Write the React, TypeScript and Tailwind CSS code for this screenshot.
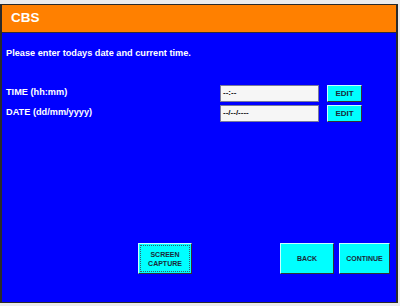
import React from "react";

const font = { fontFamily: '"Liberation Sans", Arial, sans-serif' };

const Field = ({ value }: { value: string }) => (
    <div className="flex h-[17px] w-[99px] items-center border border-[#7a7a9a] bg-[#f6f6f6] pl-[2px] text-[8px] font-bold text-[#111]">
        {value}
    </div>
);

const CyanButton = ({
    children,
    className = "",
}: {
    children: React.ReactNode;
    className?: string;
}) => (
    <button
        className={
            "flex items-center justify-center border border-t-[#c8ffff] border-l-[#c8ffff] border-r-[#333] border-b-[#333] bg-[#00ffff] text-center font-bold leading-[9px] text-[#1a2a3a] " +
            className
        }
    >
        {children}
    </button>
);

export default function App() {
    return (
        <div
            className="h-[306px] w-[400px] overflow-hidden bg-[#ececec] pt-[4px]"
            style={font}
        >
            <div className="flex h-[299px] w-[398px] flex-col border-x-2 border-y border-[#2a2a2a] bg-[#0000ff]">
                {/* header */}
                <div className="flex h-[28px] items-center border-b border-[#2a2a40] bg-[#ff8000] pl-[9px] text-[13.5px] font-bold text-white">
                    CBS
                </div>

                <div className="flex flex-1 flex-col px-[4px]">
                    <p className="mt-[14px] text-[9.2px] font-bold text-white">
                        Please enter todays date and current time.
                    </p>

                    <div className="mt-[24px] flex flex-col gap-[3px]">
                        <div className="flex items-center">
                            <span className="w-[214px] text-[9.2px] font-bold text-white">
                                TIME (hh:mm)
                            </span>
                            <Field value="--:--" />
                            <CyanButton className="ml-[8px] h-[17px] w-[35px] text-[8px]">
                                EDIT
                            </CyanButton>
                        </div>
                        <div className="flex items-center">
                            <span className="w-[214px] text-[9.2px] font-bold text-white">
                                DATE (dd/mm/yyyy)
                            </span>
                            <Field value="--/--/----" />
                            <CyanButton className="ml-[8px] h-[17px] w-[35px] text-[8px]">
                                EDIT
                            </CyanButton>
                        </div>
                    </div>

                    <div className="mt-auto mb-[28px] flex">
                        <CyanButton className="ml-[132px] h-[31px] w-[54px] p-[1px] text-[7px]">
                            <span className="flex h-full w-full items-center justify-center border border-dotted border-[#3a5a6a]">
                                SCREEN
                                <br />
                                CAPTURE
                            </span>
                        </CyanButton>
                        <CyanButton className="ml-[88px] h-[31px] w-[54px] text-[7px]">
                            BACK
                        </CyanButton>
                        <CyanButton className="ml-[5px] h-[31px] w-[51px] text-[7px]">
                            CONTINUE
                        </CyanButton>
                    </div>
                </div>
            </div>
        </div>
    );
}
